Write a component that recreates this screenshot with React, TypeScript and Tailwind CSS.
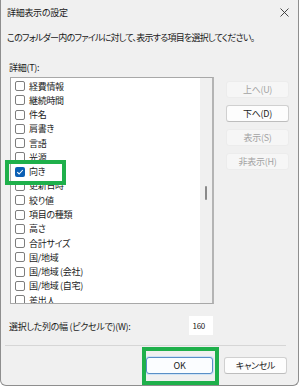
import React from 'react';

const items = [
  '経費情報',
  '継続時間',
  '件名',
  '肩書き',
  '言語',
  '光源',
  '向き',
  '更新日時',
  '絞り値',
  '項目の種類',
  '高さ',
  '合計サイズ',
  '国/地域',
  '国/地域 (会社)',
  '国/地域 (自宅)',
  '差出人',
];

const checked = '向き';

const SideButton: React.FC<{ label: string; enabled?: boolean }> = ({ label, enabled }) => (
  <div
    className={
      enabled
        ? 'h-[17px] w-[63px] flex items-center justify-center rounded-[3px] border border-[#d0d0d0] border-b-[#bdbdbd] bg-[#fdfdfd] text-[#1a1a1a]'
        : 'h-[17px] w-[63px] flex items-center justify-center rounded-[3px] border border-[#ececec] bg-[#f6f6f6] text-[#a3a3a3]'
    }
  >
    {label}
  </div>
);

const App: React.FC = () => {
  return (
    <div
      className="relative w-[299px] h-[386px] overflow-hidden bg-[#f0f0f0] border-x border-b border-[#8e8e8e] rounded-b-[6px] text-[9px] tracking-[-0.3px] text-[#1a1a1a] [font-feature-settings:'palt']"
      style={{ fontFamily: '"Noto Sans CJK JP", "Noto Sans", sans-serif' }}
    >
      {/* Title bar */}
      <div className="h-[24px] flex items-center justify-between pl-[6px] pr-[9px]">
        <span className="leading-none">詳細表示の設定</span>
        <svg width="9" height="9" viewBox="0 0 9 9" className="text-[#333]">
          <path d="M0.5 0.5 L8.5 8.5 M8.5 0.5 L0.5 8.5" stroke="currentColor" strokeWidth="0.9" />
        </svg>
      </div>

      {/* Instruction */}
      <div className="mt-[7px] h-[14px] leading-[14px] pl-[6px] whitespace-nowrap tracking-[-0.75px]">
        このフォルダー内のファイルに対して、表示する項目を選択してください。
      </div>

      {/* Label */}
      <div className="mt-[16px] h-[14px] leading-[14px] pl-[8px]">詳細(T):</div>

      {/* List + side buttons */}
      <div className="mt-[2px] flex pl-[9px]">
        <div className="w-[204px] h-[227px] flex bg-white border border-[#a8a8a8] border-r-2 border-r-[#b4b4b4]">
          <div className="flex-1 pt-[1px] overflow-hidden">
            {items.map((it) => (
              <div key={it} className="h-[14.27px] flex items-center pl-[4px] gap-[4px] whitespace-nowrap">
                {it === checked ? (
                  <span className="w-[10px] h-[10px] rounded-[2px] bg-[#0a5fb4] flex items-center justify-center">
                    <svg width="8" height="8" viewBox="0 0 8 8">
                      <path d="M1.3 4.2 L3.1 6 L6.8 2" stroke="white" strokeWidth="1.1" fill="none" />
                    </svg>
                  </span>
                ) : (
                  <span className="w-[10px] h-[10px] rounded-[2px] border border-[#7d7d7d] bg-white" />
                )}
                <span className="leading-none">{it}</span>
              </div>
            ))}
          </div>
          {/* Scrollbar */}
          <div className="w-[12px] h-full bg-[#f0f0f0] flex justify-center">
            <div className="mt-[108px] w-[2px] h-[14px] rounded-full bg-[#8a8a8a]" />
          </div>
        </div>

        <div className="ml-[12px] mt-[4px] flex flex-col gap-[7px]">
          <SideButton label="上へ(U)" />
          <SideButton label="下へ(D)" enabled />
          <SideButton label="表示(S)" />
          <SideButton label="非表示(H)" />
        </div>
      </div>

      {/* Width row */}
      <div className="mt-[12px] flex items-center pl-[8px]">
        <span className="w-[180px] leading-none pt-[2px]">選択した列の幅 (ピクセルで)(W):</span>
        <div className="w-[24px] h-[19px] bg-white flex items-center justify-end pr-[8px] text-[8px]">160</div>
      </div>

      {/* Separator */}
      <div className="mt-[10px] mx-[4px] mr-[12px] h-px bg-[#d6d6d6]" />

      {/* Footer buttons */}
      <div className="mt-[11px] flex justify-end gap-[11px] pr-[11px]">
        <div className="w-[67px] h-[17px] flex items-center justify-center rounded-[3px] border border-[#5a8fc6] bg-[#fbfdff] shadow-[0_0_0_1px_#cfe3f5]">
          OK
        </div>
        <div className="w-[63px] h-[17px] flex items-center justify-center rounded-[3px] border border-[#d0d0d0] border-b-[#bdbdbd] bg-[#fdfdfd]">
          キャンセル
        </div>
      </div>

      {/* Highlight boxes */}
      <div className="absolute left-[4px] top-[160px] w-[61px] h-[25px] border-[4px] border-[#1fb04b]" />
      <div className="absolute left-[141px] top-[347px] w-[77px] h-[38px] border-[4px] border-[#1fb04b]" />
    </div>
  );
};

export default App;
